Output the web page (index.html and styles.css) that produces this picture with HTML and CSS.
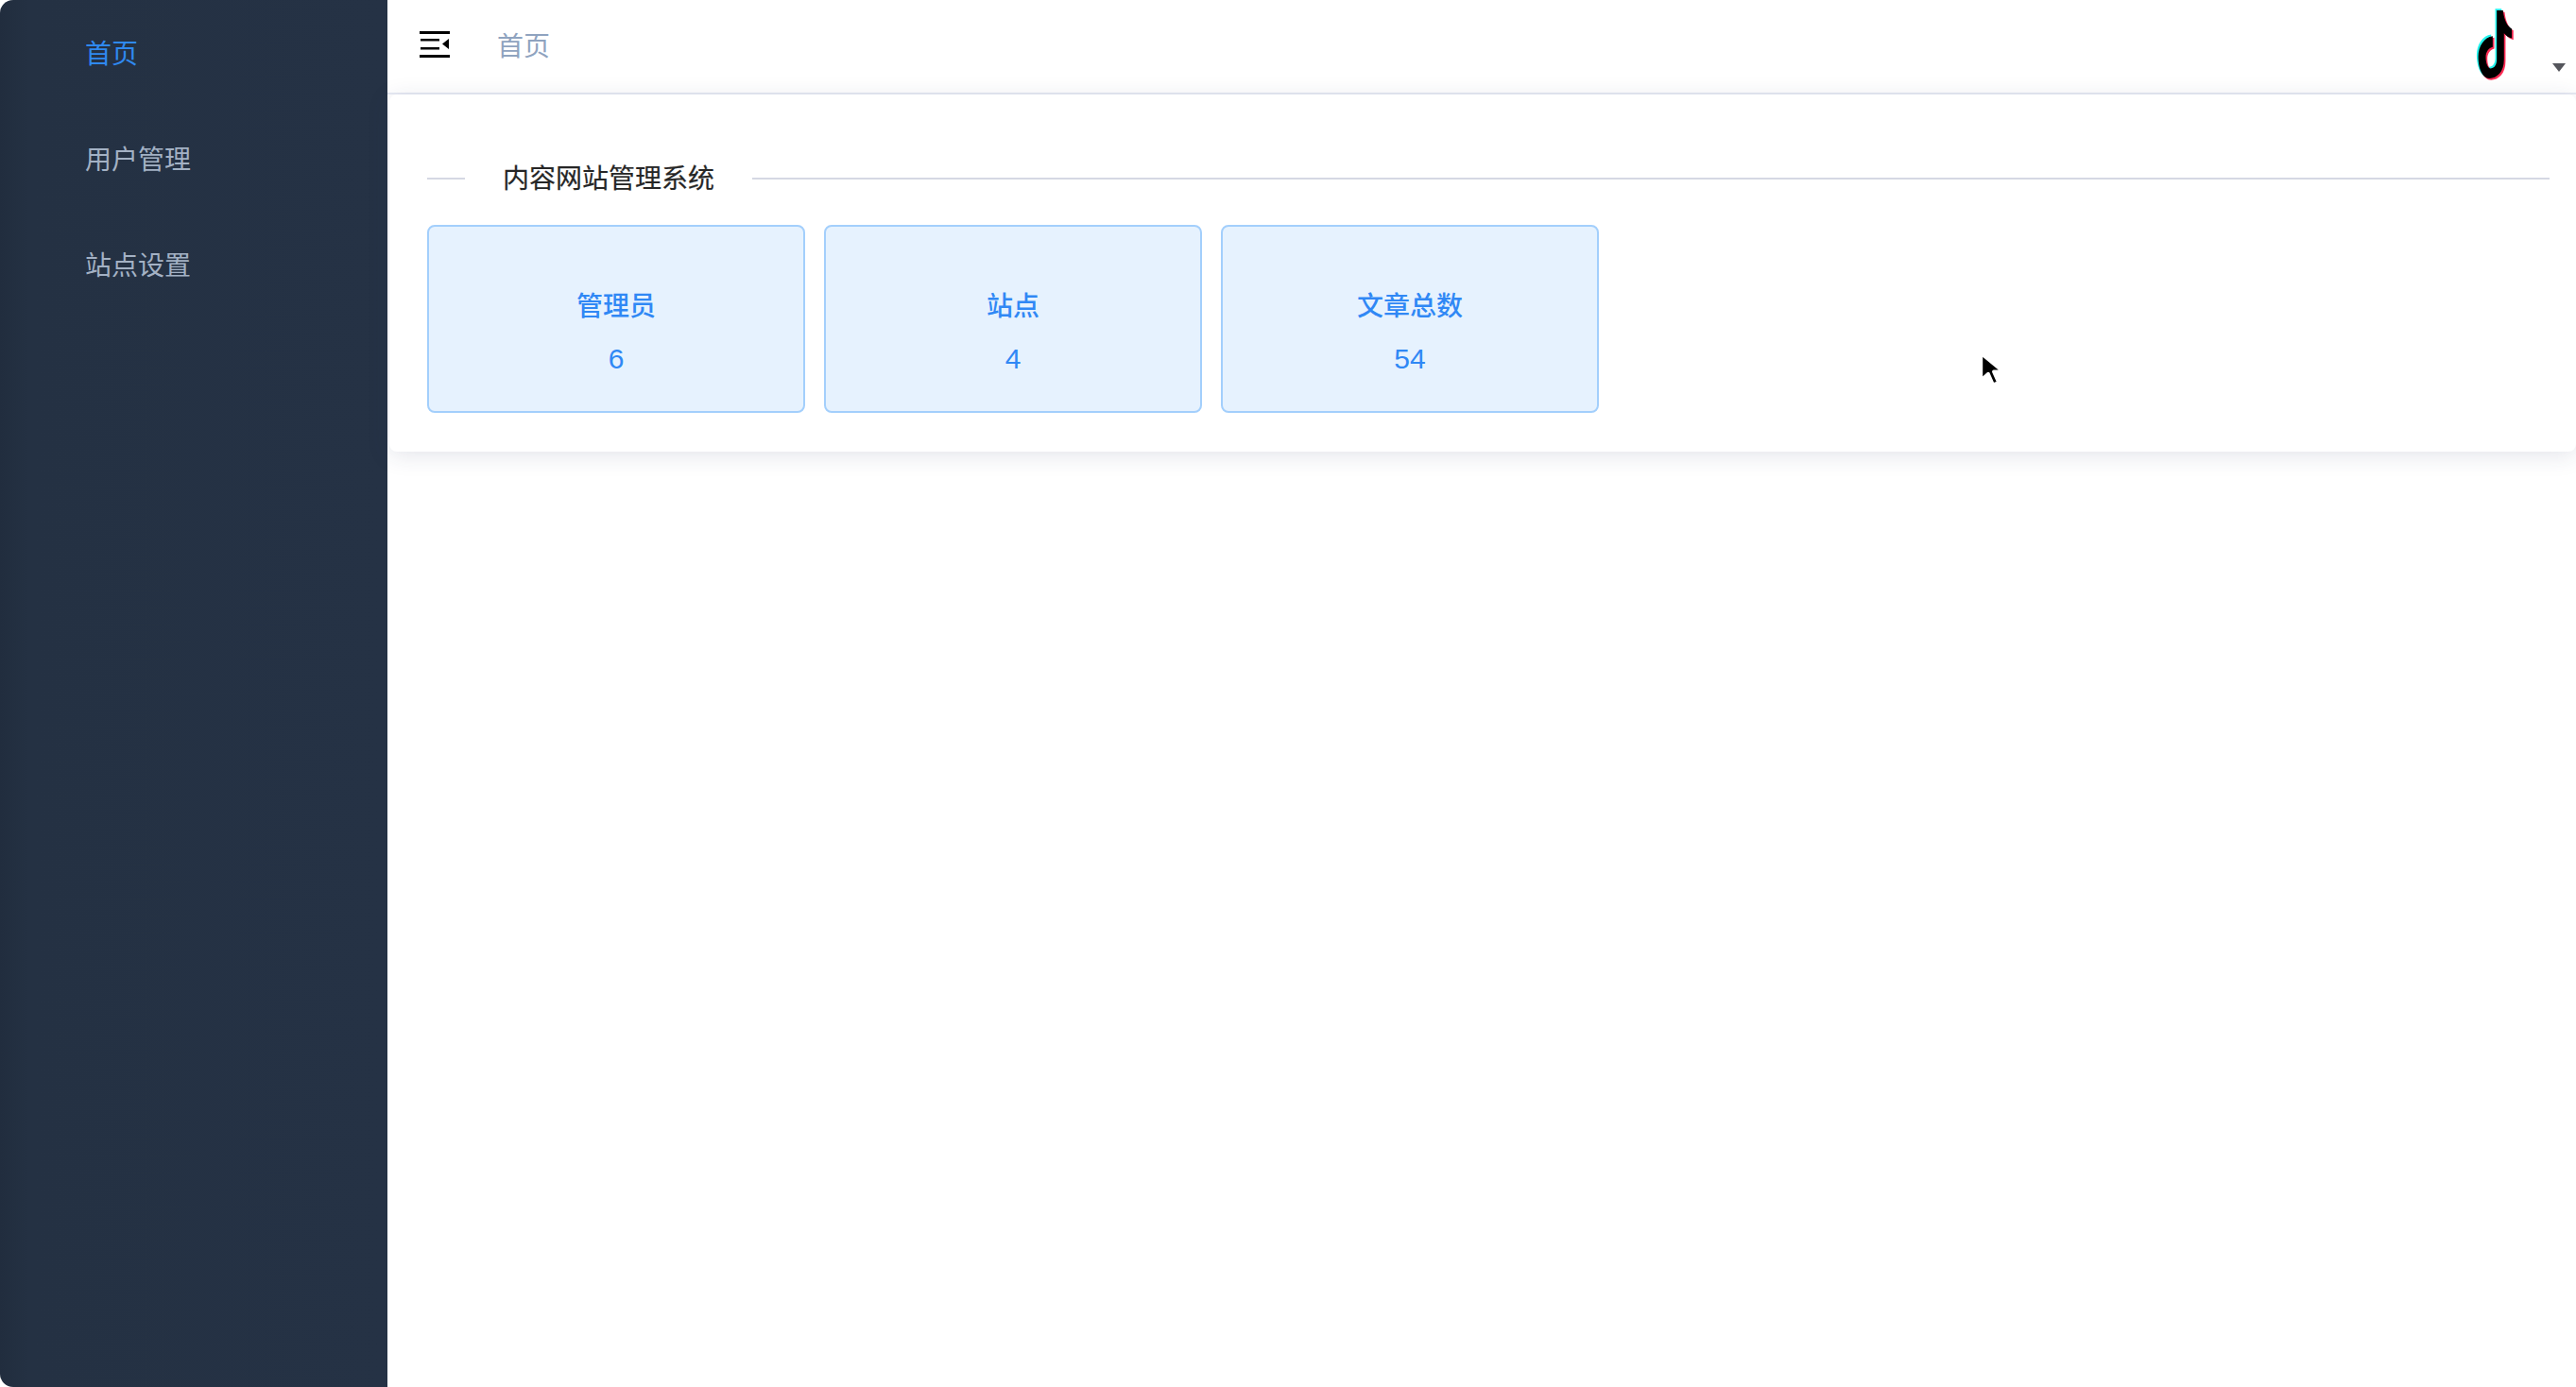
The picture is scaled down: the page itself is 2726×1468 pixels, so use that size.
FILE: index.html
```html
<!DOCTYPE html>
<html lang="zh">
<head>
<meta charset="utf-8">
<title>内容网站管理系统</title>
<link rel="stylesheet" href="styles.css">
</head>
<body>
<div class="app">
  <aside class="sidebar">
    <nav class="menu">
      <a class="menu-item active">首页</a>
      <a class="menu-item">用户管理</a>
      <a class="menu-item">站点设置</a>
    </nav>
  </aside>
  <div class="main">
    <header class="topbar">
      <svg class="fold-icon" width="32" height="28" viewBox="0 0 32 28">
        <path d="M0 0h32v3H0zM1 8h20v2.600H1zM1 17h20v2.600H1zM0 25h32v3H0zM31 8v11l-7-5.500z"/>
      </svg>
      <span class="crumb">首页</span>
      <div class="user">
        <svg class="logo" width="47" height="83" viewBox="170 15 140 250">
          <path class="cyan" transform="translate(-5 -5)" d="M245 33H265C268 65 280 85 293 92V122C283 120 275 114 268 106V190C268 230 245 250 222 250C198 250 186 215 186 180C186 148 205 118 232 115V150C220 152 210 165 210 182C210 200 216 218 226 218C238 218 245 205 245 190Z"/>
          <path class="red" transform="translate(5 5)" d="M245 33H265C268 65 280 85 293 92V122C283 120 275 114 268 106V190C268 230 245 250 222 250C198 250 186 215 186 180C186 148 205 118 232 115V150C220 152 210 165 210 182C210 200 216 218 226 218C238 218 245 205 245 190Z"/>
          <path d="M245 33H265C268 65 280 85 293 92V122C283 120 275 114 268 106V190C268 230 245 250 222 250C198 250 186 215 186 180C186 148 205 118 232 115V150C220 152 210 165 210 182C210 200 216 218 226 218C238 218 245 205 245 190Z"/>
        </svg>
        <span class="caret"></span>
      </div>
    </header>
    <section class="panel">
      <div class="divider">
        <span class="divider-text">内容网站管理系统</span>
      </div>
      <div class="stats">
        <div class="stat"><div class="stat-line label">管理员</div><div class="stat-line num">6</div></div>
        <div class="stat"><div class="stat-line label">站点</div><div class="stat-line num">4</div></div>
        <div class="stat"><div class="stat-line label">文章总数</div><div class="stat-line num">54</div></div>
      </div>
    </section>
  </div>
</div>
<svg class="cursor" width="30" height="40" viewBox="0 0 26 36" preserveAspectRatio="none">
  <path fill="#000" stroke="#fff" stroke-width="3" stroke-linejoin="round" d="M3 3v25l6.500-6 4.500 10.500 5-2-4.500-10.500h8.500z"/>
</svg>
</body>
</html>
```
FILE: styles.css
```css
* { box-sizing: border-box; }
html, body { margin: 0; height: 100%; background: #fff; overflow: hidden; }
body { font-family: "Noto Sans CJK SC", "Liberation Sans", sans-serif; font-size: 28px; }

.app { display: flex; height: 1468px; }

.sidebar {
  width: 410px;
  flex: none;
  background: linear-gradient(90deg, #212d3e 0, #243143 30px, #253245 100%);
  border-radius: 14px 0 0 14px;
}
.menu { display: flex; flex-direction: column; }
.menu-item {
  height: 112px;
  line-height: 110px;
  padding-left: 90px;
  color: #a3b1c4;
}
.menu-item.active { color: #2f89f0; }

.main { flex: 1; min-width: 0; display: flex; flex-direction: column; }

.topbar {
  height: 100px;
  flex: none;
  display: flex;
  align-items: flex-start;
  border-bottom: 2px solid #e7eaf3;
  padding-left: 34px;
}
.fold-icon { margin-top: 33px; flex: none; }
.crumb { margin-left: 50px; line-height: 94px; color: #8fa3bf; }
.user { margin-left: auto; display: flex; align-items: flex-start; padding-right: 11px; }
.logo { margin-top: 5px; flex: none; }
.cyan { fill: #25f4ee; }
.red { fill: #fe2c55; }
.caret {
  margin: 67px 0 0 37px;
  width: 0;
  height: 0;
  border-left: 7px solid transparent;
  border-right: 7px solid transparent;
  border-top: 9px solid #55565c;
}

.panel {
  margin-left: 2px;
  padding: 60px 28px 41px 40px;
  border-radius: 8px;
  background: #fff;
  box-shadow: 0 4px 24px rgba(40, 50, 90, .13);
}
.divider {
  display: flex;
  align-items: center;
  height: 58px;
  margin-bottom: 20px;
  font-size: 28px;
  color: #262626;
  -webkit-text-stroke: .2px #262626;
}
.divider::before, .divider::after { content: ""; height: 2px; background: #d5d8e3; }
.divider::before { width: 40px; flex: none; }
.divider::after { flex: 1; }
.divider-text { padding: 0 40px 4px; }

.stats { display: flex; gap: 20px; }
.stat {
  width: 400px;
  height: 199px;
  padding-top: 56px;
  border: 2px solid #a3cffc;
  border-radius: 8px;
  background: #e6f2fe;
  color: #3088f5;
  text-align: center;
}
.stat-line { height: 56px; line-height: 56px; }
.label { line-height: 53px; font-weight: 500; }
.num { font-family: "Liberation Sans", sans-serif; font-size: 30px; }

.cursor { position: absolute; left: 2093px; top: 371px; }
```
